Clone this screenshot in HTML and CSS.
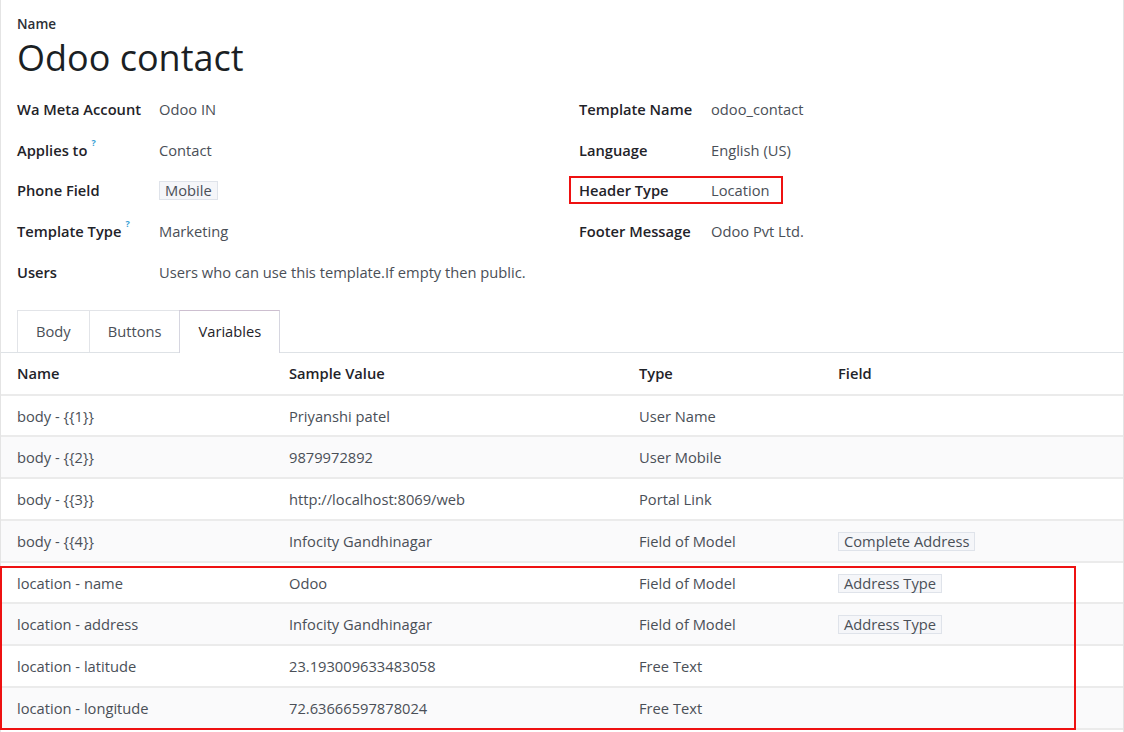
FILE: index.html
```html
<!DOCTYPE html>
<html>
<head>
<meta charset="utf-8">
<link rel="stylesheet" href="styles.css">
</head>
<body>
<div class="sheet">
  <div class="title-block">
    <div class="name-label">Name</div>
    <h1 class="title">Odoo contact</h1>
  </div>

  <div class="groups">
    <div class="group left">
      <div class="row"><div class="lbl">Wa Meta Account</div><div class="val">Odoo IN</div></div>
      <div class="row"><div class="lbl">Applies to<sup class="help">?</sup></div><div class="val">Contact</div></div>
      <div class="row"><div class="lbl">Phone Field</div><div class="val"><span class="badge">Mobile</span></div></div>
      <div class="row"><div class="lbl">Template Type<sup class="help">?</sup></div><div class="val">Marketing</div></div>
      <div class="row"><div class="lbl">Users</div><div class="val">Users who can use this template.If empty then public.</div></div>
    </div>
    <div class="group right">
      <div class="row"><div class="lbl">Template Name</div><div class="val">odoo_contact</div></div>
      <div class="row"><div class="lbl">Language</div><div class="val">English (US)</div></div>
      <div class="row marked"><div class="lbl">Header Type</div><div class="val">Location</div><div class="mark-box"></div></div>
      <div class="row"><div class="lbl">Footer Message</div><div class="val">Odoo Pvt Ltd.</div></div>
    </div>
  </div>

  <div class="tabs">
    <div class="tab">Body</div>
    <div class="tab">Buttons</div>
    <div class="tab active">Variables</div>
  </div>

  <div class="table-wrap">
    <table class="vars">
      <colgroup>
        <col class="c1"><col class="c2"><col class="c3"><col class="c4">
      </colgroup>
      <thead>
        <tr><th>Name</th><th>Sample Value</th><th>Type</th><th>Field</th></tr>
      </thead>
      <tbody>
        <tr><td>body - {{1}}</td><td>Priyanshi patel</td><td>User Name</td><td></td></tr>
        <tr><td>body - {{2}}</td><td>9879972892</td><td>User Mobile</td><td></td></tr>
        <tr><td>body - {{3}}</td><td>http://localhost:8069/web</td><td>Portal Link</td><td></td></tr>
        <tr><td>body - {{4}}</td><td>Infocity Gandhinagar</td><td>Field of Model</td><td><span class="badge">Complete Address</span></td></tr>
        <tr><td>location - name</td><td>Odoo</td><td>Field of Model</td><td><span class="badge">Address Type</span></td></tr>
        <tr><td>location - address</td><td>Infocity Gandhinagar</td><td>Field of Model</td><td><span class="badge">Address Type</span></td></tr>
        <tr><td>location - latitude</td><td>23.193009633483058</td><td>Free Text</td><td></td></tr>
        <tr><td>location - longitude</td><td>72.63666597878024</td><td>Free Text</td><td></td></tr>
      </tbody>
    </table>
    <div class="table-mark"></div>
  </div>
</div>
</body>
</html>
```

FILE: styles.css
```css
* { box-sizing: border-box; }

html, body {
  margin: 0;
  padding: 0;
  background: #ffffff;
}

body {
  font-family: "Open Sans", "Noto Sans", sans-serif;
  font-size: 14.7px;
  color: #4a4f57;
}

.sheet {
  width: 1124px;
  min-height: 732px;
  border-left: 1px solid #e4e4e4;
  border-right: 1px solid #e4e4e4;
  padding-top: 16px;
}

.title-block {
  padding: 0 16px;
}

.name-label {
  font-size: 13.5px;
  font-weight: 600;
  line-height: 17px;
  color: #2b2f36;
}

.title {
  margin: 0;
  font-weight: 400;
  font-size: 36px;
  line-height: 50px;
  color: #1b1f24;
}

.groups {
  display: grid;
  grid-template-columns: 562px 1fr;
  padding: 6px 16px 0 16px;
}

.group.left .lbl { width: 142px; }
.group.right .lbl { width: 132px; }

.row {
  display: flex;
  align-items: center;
  height: 40.6px;
  position: relative;
}

.lbl {
  flex: none;
  font-weight: 600;
  color: #1f2329;
}

.val {
  color: #4a4f57;
}

.help {
  color: #3a9fd6;
  font-size: 9px;
  font-weight: 700;
  margin-left: 4px;
  position: relative;
  top: -4px;
}

.badge {
  display: inline-block;
  background: #f5f6f9;
  border: 1px solid #dfe3ea;
  padding: 0 5px;
  line-height: 17px;
  color: #4a4f57;
}

.mark-box {
  position: absolute;
  left: -10px;
  top: 50%;
  transform: translateY(-50%);
  width: 214px;
  height: 28px;
  border: 2px solid #ee1111;
}

.tabs {
  display: flex;
  margin-top: 18px;
  padding-left: 16px;
  border-bottom: 1px solid #dee2e6;
}

.tab {
  height: 42px;
  line-height: 40px;
  padding: 0 18px;
  border: 1px solid #e2e4e8;
  border-bottom: none;
  margin-right: -1px;
  color: #4a4f57;
  background: #ffffff;
}

.tab.active {
  color: #1f2329;
  border-color: #d6d6e0;
  border-top-color: #cdbfd0;
  margin-bottom: -1px;
  height: 43px;
}

.table-wrap {
  position: relative;
}

.vars {
  width: 100%;
  border-collapse: collapse;
  table-layout: fixed;
}

.vars col.c1 { width: 272px; }
.vars col.c2 { width: 350px; }
.vars col.c3 { width: 199px; }
.vars col.c4 { width: auto; }

.vars th, .vars td {
  text-align: left;
  padding: 0 16px;
  height: 41.75px;
  border-bottom: 2px solid #ebebeb;
  white-space: nowrap;
}

.vars th {
  font-weight: 600;
  color: #1f2329;
}

.vars td {
  color: #4a4f57;
}

.vars tbody tr:nth-child(even) td {
  background: #fafafb;
}

.table-mark {
  position: absolute;
  left: -1px;
  top: 213px;
  width: 1076px;
  height: 164px;
  border: 2px solid #ee1111;
  pointer-events: none;
}
```
